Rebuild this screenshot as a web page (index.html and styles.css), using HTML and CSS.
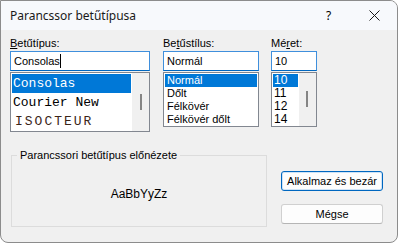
FILE: index.html
```html
<!DOCTYPE html>
<html lang="hu">

<head>
    <meta charset="UTF-8">
    <meta name="viewport" content="width=device-width, initial-scale=1.0">
    <title>Parancssor betűtípusa</title>
    <link rel="stylesheet" href="styles.css">
</head>

<body>
    <div class="window">
        <!-- title bar -->
        <div class="titlebar">
            <span class="title">Parancssor betűtípusa</span>
            <span class="help">?</span>
            <span class="close">
                <svg width="11" height="11" viewBox="0 0 11 11">
                    <path d="M0.5 0.5 L10.5 10.5 M10.5 0.5 L0.5 10.5" stroke="#1a1a1a" stroke-width="1" fill="none" />
                </svg>
            </span>
        </div>

        <div class="content">
            <!-- font / style / size pickers -->
            <div class="pickers">
                <div class="field field-font">
                    <div class="label"><u>B</u>etűtípus:</div>
                    <div class="input">Consolas<span class="caret"></span></div>
                    <div class="list list-font">
                        <div class="items">
                            <div class="item selected">Consolas</div>
                            <div class="item">Courier New</div>
                            <div class="item spaced">ISOCTEUR</div>
                        </div>
                        <div class="scrollbar"><div class="thumb"></div></div>
                    </div>
                </div>

                <div class="field field-style">
                    <div class="label">Be<u>t</u>űstílus:</div>
                    <div class="input">Normál</div>
                    <div class="list list-style">
                        <div class="items">
                            <div class="item selected">Normál</div>
                            <div class="item">Dőlt</div>
                            <div class="item">Félkövér</div>
                            <div class="item">Félkövér dőlt</div>
                        </div>
                    </div>
                </div>

                <div class="field field-size">
                    <div class="label">Mé<u>r</u>et:</div>
                    <div class="input">10</div>
                    <div class="list list-size">
                        <div class="items">
                            <div class="item selected">10</div>
                            <div class="item">11</div>
                            <div class="item">12</div>
                            <div class="item">14</div>
                        </div>
                        <div class="scrollbar"><div class="thumb"></div></div>
                    </div>
                </div>
            </div>

            <!-- preview + buttons -->
            <div class="bottom">
                <fieldset class="preview">
                    <legend>Parancssori betűtípus előnézete</legend>
                    <div class="sample">AaBbYyZz</div>
                </fieldset>
                <div class="buttons">
                    <button class="btn default">Alkalmaz és bezár</button>
                    <button class="btn">Mégse</button>
                </div>
            </div>
        </div>
    </div>
</body>

</html>
```

FILE: styles.css
```css
body {
    margin: 0;
    padding: 0;
    background-color: #ffffff;
    font-family: "Liberation Sans", Arial, sans-serif;
    font-size: 11px;
    color: #000000;
}

.window {
    width: 398px;
    height: 243px;
    box-sizing: border-box;
    border: 1px solid #8c8c8c;
    border-radius: 0 8px 8px 8px;
    background-color: #f0f0f0;
    overflow: hidden;
}

.titlebar {
    height: 29px;
    display: flex;
    align-items: center;
    background-color: #f7f9fc;
    padding-left: 9px;
}

.title {
    font-family: "Noto Sans", "Open Sans", sans-serif;
    font-size: 12px;
    flex: 1;
    color: #1a1a1a;
}

.help {
    font-family: "Noto Sans", sans-serif;
    font-size: 12px;
    width: 12px;
    margin-right: 31px;
}

.close {
    display: flex;
    width: 11px;
    margin-right: 17px;
}

.content {
    padding: 6px 0 0 9px;
}

.pickers {
    display: flex;
    align-items: flex-start;
}

.field-font {
    width: 140px;
}

.field-style {
    width: 96px;
    margin-left: 13px;
}

.field-size {
    width: 46px;
    margin-left: 12px;
}

.label {
    height: 15px;
    line-height: 15px;
}

.input {
    height: 20px;
    box-sizing: border-box;
    border: 1px solid #3f8fdc;
    border-bottom-color: #0067c0;
    background-color: #ffffff;
    line-height: 18px;
    padding-left: 3px;
    display: flex;
    align-items: center;
}

.caret {
    width: 1px;
    height: 14px;
    background-color: #000000;
}

.list {
    margin-top: 1px;
    box-sizing: border-box;
    border: 1px solid #828790;
    background-color: #ffffff;
    display: flex;
}

.items {
    flex: 1;
    padding: 1px;
}

.item {
    white-space: nowrap;
    padding-left: 2px;
    height: 13px;
    line-height: 13px;
}

.selected {
    background-color: #0078d7;
    color: #ffffff;
}

.list-font {
    height: 60px;
}

.list-font .item {
    font-family: "Liberation Mono", "DejaVu Sans Mono", monospace;
    font-size: 13px;
    height: 19px;
    line-height: 19px;
    padding-left: 1px;
}

.list-font .spaced {
    letter-spacing: 2px;
    padding-left: 3px;
    color: #3b2518;
}

.list-style,
.list-size {
    height: 55px;
}

.list-size .item {
    font-size: 12px;
    padding-left: 1px;
}

.scrollbar {
    width: 17px;
    background-color: #f0f0f0;
    box-sizing: border-box;
    padding: 21px 0 0 8px;
}

.list-size .scrollbar {
    padding-top: 18px;
    padding-left: 7px;
}

.thumb {
    width: 2px;
    height: 16px;
    background-color: #858585;
}

.bottom {
    display: flex;
    align-items: flex-start;
    margin-top: 16px;
}

.preview {
    margin: 0 0 0 1px;
    padding: 0;
    width: 256px;
    height: 79px;
    box-sizing: border-box;
    border: 1px solid #dcdcdc;
    display: flex;
    align-items: center;
    justify-content: center;
}

.preview legend {
    margin-left: 5px;
    padding: 0 3px;
    line-height: 14px;
}

.sample {
    font-size: 12px;
}

.buttons {
    display: flex;
    flex-direction: column;
    gap: 13px;
    margin: 23px 0 0 14px;
}

.btn {
    width: 102px;
    height: 20px;
    box-sizing: border-box;
    font-family: "Liberation Sans", Arial, sans-serif;
    font-size: 11px;
    color: #000000;
    background-color: #fdfdfd;
    border: 1px solid #d0d0d0;
    border-bottom-color: #b5b5b5;
    border-radius: 3px;
    padding: 0;
}

.default {
    border: 1px solid #0067c0;
    box-shadow: inset 0 0 0 1px #cfe3f6;
}
```
